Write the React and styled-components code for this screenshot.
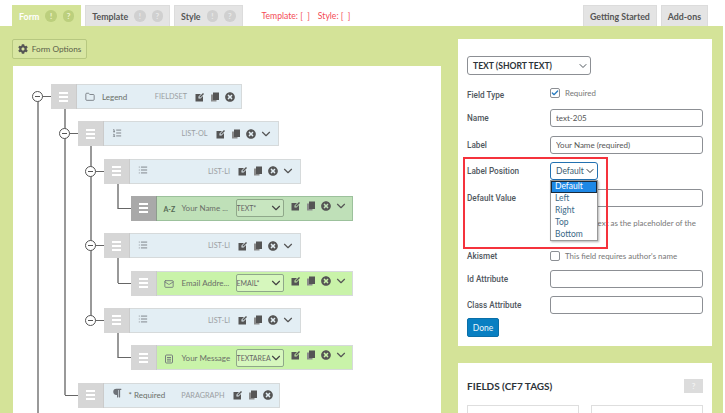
import React from "react";
import styled, { createGlobalStyle } from "styled-components";
import { FaCog, FaTimesCircle, FaParagraph } from "react-icons/fa";
import { ChevronDown, Folder, List, ListOrdered, Mail, Check } from "lucide-react";

const FONT = `Lato, "Open Sans", sans-serif`;
const LABEL_FONT = `Roboto, "Open Sans", sans-serif`;

const Global = createGlobalStyle`
  html, body { margin: 0; padding: 0; background: #fff; overflow: hidden; }
  * { box-sizing: border-box; }
  body { font-family: ${FONT}; }
`;

const Page = styled.div`
  width: 725px;
  height: 413px;
  overflow: hidden;
  display: flex;
  flex-direction: column;
`;

const TabBar = styled.div`
  display: flex;
  align-items: flex-end;
  height: 26px;
  padding: 0 17px 0 12px;
  gap: 4px;
`;

const Tab = styled.div`
  height: 21px;
  padding: 0 6px;
  display: flex;
  align-items: center;
  gap: 6px;
  font-size: 8.8px;
  font-weight: 700;
  color: ${(p) => (p.$active ? "#fff" : "#555")};
  background: ${(p) => (p.$active ? "#d4e398" : "#e4e4e4")};
  border: 1px solid ${(p) => (p.$active ? "#d4e398" : "#dcdcdc")};
  border-bottom: none;
`;

const Badges = styled.span`
  display: flex;
  gap: 6px;
`;

const Badge = styled.span`
  width: 11.5px;
  height: 11.5px;
  border-radius: 50%;
  background: ${(p) => (p.$active ? "#bccf7d" : "#d0d0d0")};
  color: ${(p) => (p.$active ? "#eef4d3" : "#e9e9e9")};
  font-size: 8px;
  font-weight: 700;
  display: flex;
  align-items: center;
  justify-content: center;
`;

const Notes = styled.div`
  margin-left: 15px;
  align-self: flex-end;
  height: 15px;
  display: flex;
  gap: 8px;
  font-size: 8.6px;
  color: #f44a55;
`;

const Spacer = styled.div`
  flex: 1;
`;

const Board = styled.div`
  flex: 1;
  margin-right: 2px;
  padding: 13px 11px 0 13px;
  background: #d4e398;
  display: grid;
  grid-template-columns: 428px 254px;
  column-gap: 17px;
  min-height: 0;
`;

const Column = styled.div`
  display: flex;
  flex-direction: column;
  min-height: 0;
`;

const OptionsButton = styled.div`
  align-self: flex-start;
  height: 20px;
  width: 75px;
  margin-left: -1px;
  border: 1px solid #b7c880;
  border-radius: 2px;
  display: flex;
  align-items: center;
  justify-content: center;
  gap: 4px;
  font-size: 8.2px;
  color: #5a5f4a;
  background: #d8e6a2;
  svg { width: 10px; height: 10px; color: #555; }
`;

const Canvas = styled.div`
  flex: 1;
  margin-top: 7px;
  background: #fff;
  overflow: hidden;
  padding: 18px 0 0 38px;
`;

const Branch = styled.ul`
  list-style: none;
  margin: 0 0 0 ${(p) => (p.$root ? 0 : 26.5)}px;
  padding: 0;
`;

const Node = styled.li`
  position: relative;
  margin-top: ${(p) => (p.$root ? 0 : 12.33)}px;

  &::before {
    content: "";
    position: absolute;
    left: -14px;
    top: ${(p) => (p.$root ? "12px" : "-12.33px")};
    width: 2px;
    height: ${(p) => (p.$root ? "400px" : "calc(100% + 12.33px)")};
    background: #999;
  }
  &:last-child::before {
    height: ${(p) => (p.$root ? 400 : 25)}px;
  }
  &::after {
    content: "";
    position: absolute;
    left: -13px;
    top: 12px;
    width: 13px;
    height: 1px;
    background: #666;
  }
`;

const Collapse = styled.span`
  position: absolute;
  z-index: 1;
  left: -19px;
  top: 7px;
  width: 11px;
  height: 11px;
  border: 1px solid #555;
  border-radius: 50%;
  background: #fff;
  &::after {
    content: "";
    position: absolute;
    left: 2px;
    right: 2px;
    top: 4px;
    height: 1px;
    background: #555;
  }
`;

const ROW_WIDTHS = { fieldset: 191, ol: 201, li: 197, leaf: 222, paragraph: 202 };

const Row = styled.div`
  position: relative;
  z-index: 1;
  width: ${(p) => ROW_WIDTHS[p.$kind]}px;
  height: 25px;
  display: flex;
  background: ${(p) => (p.$selected ? "#bfe0b8" : p.$kind === "leaf" ? "#c9f3a9" : "#e3eef4")};
  border: 1px solid ${(p) => (p.$selected ? "#9cc19c" : "#d6dadb")};
`;

const Handle = styled.div`
  flex: none;
  width: 26px;
  margin: -1px 0 -1px -1px;
  background: ${(p) => (p.$selected ? "#a9a9a9" : "#d6d6d6")};
  border-right: 1px solid ${(p) => (p.$selected ? "#8d9c8d" : "#cbcbcb")};
  display: flex;
  flex-direction: column;
  align-items: center;
  justify-content: center;
  gap: 2px;
`;

const Bar = styled.span`
  width: 9px;
  height: 2px;
  background: #fff;
`;

const RowBody = styled.div`
  flex: 1;
  min-width: 0;
  display: flex;
  align-items: center;
  padding: 0 6px 0 ${(p) => (p.$leaf ? 7 : 8)}px;
  color: #666;
`;

const TypeIcon = styled.span`
  flex: none;
  width: ${(p) => (p.$leaf ? 18 : 17)}px;
  margin-top: ${(p) => p.$shift || 0}px;
  display: flex;
  align-items: center;
  color: #6d7278;
  svg { width: 10px; height: 10px; }
`;

const AZ = styled.span`
  font-size: 7px;
  font-weight: 700;
  color: #556a55;
`;

const Label = styled.span`
  font-size: 8px;
  color: #6a6f68;
  white-space: nowrap;
  flex: none;
  width: ${(p) => (p.$leaf ? "54px" : "auto")};
`;

const Kind = styled.span`
  font-size: 7.3px;
  color: #9b9fa3;
  margin-left: auto;
  margin-right: 8px;
`;

const TagSelect = styled.div`
  flex: none;
  width: 48px;
  height: 18px;
  border: 1px solid #8fa88a;
  border-radius: 2px;
  background: ${(p) => (p.$selected ? "#c8e6c0" : "#d6f7bd")};
  display: flex;
  align-items: center;
  justify-content: space-between;
  font-size: 7px;
  color: #666;
  margin-right: 7px;
  overflow: hidden;
  svg { flex: none; width: 14px; height: 14px; color: #444; margin-left: -3px; }
`;

const Actions = styled.span`
  flex: none;
  display: flex;
  align-items: center;
  gap: 5px;
  margin-top: ${(p) => (p.$up ? -5 : 0)}px;
  color: #555;
  svg { display: block; width: 10px; height: 10px; }
  svg.chev { width: 14px; height: 14px; margin: 0 -1px 0 -2px; color: #555; }
`;

const EditIcon = () => (
  <svg viewBox="0 0 20 20" fill="currentColor">
    <path d="M1 4h11l-5 5v4h4l5-5v11H1z" />
    <path d="M9 9l7-7 2 2-7 7H9z" />
  </svg>
);

const CopyIcon = () => (
  <svg viewBox="0 0 20 20">
    <rect x="2" y="5" width="11" height="14" fill="#8b8b8b" />
    <rect x="6" y="1" width="12" height="15" fill="#555" />
  </svg>
);

const MessageIcon = () => (
  <svg viewBox="0 0 20 20" fill="none" stroke="currentColor" strokeWidth="1.8">
    <rect x="3" y="2" width="14" height="16" rx="2" />
    <path d="M6 7h8M6 10.5h8M6 14h8" />
  </svg>
);

const TYPE_ICONS = {
  folder: <Folder />,
  ol: <ListOrdered />,
  li: <List />,
  para: <FaParagraph />,
  mail: <Mail />,
  message: <MessageIcon />,
};

const iconShift = (kind) => {
  if (kind === "ol" || kind === "li") return -2;
  if (kind === "paragraph") return -5;
  if (kind === "leaf") return 2;
  return 0;
};

const TreeNode = ({ node, root }) => {
  const leaf = node.kind === "leaf";
  const hasChildren = !!node.children;
  const listLike = node.kind === "ol" || node.kind === "li";
  return (
    <Node $root={root}>
      {(hasChildren || root) && <Collapse />}
      <Row $kind={node.kind} $selected={node.selected}>
        <Handle $selected={node.selected}>
          <Bar />
          <Bar />
          <Bar />
        </Handle>
        <RowBody $leaf={leaf}>
          <TypeIcon $leaf={leaf} $shift={iconShift(node.kind)}>
            {node.az ? <AZ>A-Z</AZ> : TYPE_ICONS[node.icon]}
          </TypeIcon>
          {node.label && <Label $leaf={leaf}>{node.label}</Label>}
          {leaf ? (
            <TagSelect $selected={node.selected}>
              {node.tag}
              <ChevronDown />
            </TagSelect>
          ) : (
            <Kind>{node.type}</Kind>
          )}
          <Actions $up={leaf}>
            <EditIcon />
            <CopyIcon />
            <FaTimesCircle />
            {(leaf || listLike) && <ChevronDown className="chev" />}
          </Actions>
        </RowBody>
      </Row>
      {hasChildren && (
        <Branch>
          {node.children.map((c, i) => (
            <TreeNode key={i} node={c} />
          ))}
        </Branch>
      )}
    </Node>
  );
};

const tree = {
  kind: "fieldset",
  icon: "folder",
  label: "Legend",
  type: "FIELDSET",
  children: [
    {
      kind: "ol",
      icon: "ol",
      type: "LIST-OL",
      children: [
        {
          kind: "li",
          icon: "li",
          type: "LIST-LI",
          children: [{ kind: "leaf", az: true, label: "Your Name ...", tag: "TEXT*", selected: true }],
        },
        {
          kind: "li",
          icon: "li",
          type: "LIST-LI",
          children: [{ kind: "leaf", icon: "mail", label: "Email Addre...", tag: "EMAIL*" }],
        },
        {
          kind: "li",
          icon: "li",
          type: "LIST-LI",
          children: [{ kind: "leaf", icon: "message", label: "Your Message", tag: "TEXTAREA" }],
        },
      ],
    },
    { kind: "paragraph", icon: "para", label: "* Required", type: "PARAGRAPH" },
  ],
};

const Panel = styled.section`
  position: relative;
  background: #fff;
  padding: ${(p) => (p.$fields ? "16px 9px 0" : "17px 9px 9px")};
  margin-top: ${(p) => (p.$fields ? 17 : 0)}px;
`;

const TypeSelect = styled.div`
  width: 124px;
  height: 19px;
  border: 1px solid #8c8f94;
  border-radius: 3px;
  padding: 0 1px 0 5px;
  display: flex;
  align-items: center;
  justify-content: space-between;
  font-size: 8.6px;
  font-weight: 700;
  color: #2c3338;
  svg { width: 12px; height: 12px; color: #50575e; }
`;

const Field = styled.div`
  position: relative;
  display: grid;
  grid-template-columns: 83px 153px;
  align-items: ${(p) => (p.$start ? "start" : "center")};
  margin-top: ${(p) => (p.$gap === undefined ? 9 : p.$gap)}px;
`;

const FieldLabel = styled.label`
  font-family: ${LABEL_FONT};
  font-size: 8.2px;
  font-weight: 500;
  color: #50575e;
  padding-top: ${(p) => p.$offset || 0}px;
`;

const TextInput = styled.input`
  width: 153px;
  height: 18px;
  border: 1px solid #8c8f94;
  border-radius: 3px;
  padding: 0 5px;
  font: 8px ${FONT};
  color: #555;
  background: #fff;
  outline: none;
`;

const CheckLine = styled.div`
  display: flex;
  align-items: flex-start;
  gap: 5px;
  font-size: 7.9px;
  line-height: ${(p) => (p.$wrap ? 14 : 11)}px;
  color: #777;
`;

const Box = styled.span`
  flex: none;
  width: 10px;
  height: 10px;
  margin-top: ${(p) => (p.$wrap ? 2 : 0)}px;
  border: 1px solid #8c8f94;
  border-radius: 2px;
  background: #fff;
  display: flex;
  align-items: center;
  justify-content: center;
  svg { width: 8px; height: 8px; color: #2a7cc0; stroke-width: 4; }
`;

const PositionSelect = styled.div`
  width: 48px;
  height: 18px;
  border: 1px solid #2271b1;
  border-radius: 3px;
  padding: 0 1px 0 5px;
  display: flex;
  align-items: center;
  justify-content: space-between;
  font-size: 8.5px;
  color: #3a5a70;
  background: #fff;
  svg { width: 12px; height: 12px; color: #333; }
`;

const Dropdown = styled.ul`
  position: absolute;
  z-index: 3;
  left: 83px;
  top: 18px;
  width: 48px;
  height: 61px;
  margin: 0;
  padding: 0;
  list-style: none;
  background: #fff;
  border: 1px solid #999;
  box-shadow: 1px 1px 2px rgba(0, 0, 0, 0.3);
`;

const Option = styled.li`
  height: 12px;
  line-height: 11px;
  padding-left: 4px;
  font-size: 8.5px;
  color: ${(p) => (p.$on ? "#fff" : "#3c6a88")};
  background: ${(p) => (p.$on ? "#1e88e5" : "transparent")};
  outline: ${(p) => (p.$on ? "1px solid #1a2a3a" : "none")};
  outline-offset: -1px;
`;

const Callout = styled.div`
  position: absolute;
  z-index: 4;
  left: 5px;
  top: 118px;
  width: 145px;
  height: 92px;
  border: 2px solid #f5323c;
  pointer-events: none;
`;

const DoneButton = styled.button`
  display: block;
  margin-top: 4px;
  width: 32px;
  height: 19px;
  padding: 0;
  border: 1px solid #0a6fa8;
  border-radius: 2px;
  background: #087fc2;
  color: #e8f4fb;
  font: 8.5px ${FONT};
`;

const FieldsHead = styled.div`
  display: flex;
  align-items: center;
  justify-content: space-between;
  height: 14px;
`;

const FieldsTitle = styled.h2`
  margin: 0;
  font-size: 10px;
  font-weight: 700;
  color: #2c3338;
`;

const HelpButton = styled.span`
  width: 19px;
  height: 14px;
  background: #dcdcdc;
  color: #f2f2f2;
  font-size: 8px;
  font-weight: 700;
  display: flex;
  align-items: center;
  justify-content: center;
`;

const Palette = styled.div`
  display: grid;
  grid-template-columns: 112px 112px;
  justify-content: space-between;
  margin-top: 12px;
`;

const PaletteBox = styled.div`
  height: 40px;
  border: 1px solid #dedede;
`;

const InfoBadges = ({ active }) => (
  <Badges>
    <Badge $active={active}>!</Badge>
    <Badge $active={active}>?</Badge>
  </Badges>
);

export default function App() {
  return (
    <Page>
      <Global />
      <TabBar>
        <Tab $active>
          Form
          <InfoBadges active />
        </Tab>
        <Tab>
          Template
          <InfoBadges />
        </Tab>
        <Tab>
          Style
          <InfoBadges />
        </Tab>
        <Notes>
          <span>Template: [ &nbsp;]</span>
          <span>Style: [ &nbsp;]</span>
        </Notes>
        <Spacer />
        <Tab>Getting Started</Tab>
        <Tab>Add-ons</Tab>
      </TabBar>
      <Board>
        <Column>
          <OptionsButton>
            <FaCog />
            Form Options
          </OptionsButton>
          <Canvas>
            <Branch $root>
              <TreeNode node={tree} root />
            </Branch>
          </Canvas>
        </Column>
        <Column>
          <Panel>
            <TypeSelect>
              TEXT (SHORT TEXT)
              <ChevronDown />
            </TypeSelect>
            <Field $start $gap={13}>
              <FieldLabel $offset={2}>Field Type</FieldLabel>
              <CheckLine>
                <Box>
                  <Check />
                </Box>
                Required
              </CheckLine>
            </Field>
            <Field>
              <FieldLabel>Name</FieldLabel>
              <TextInput defaultValue="text-205" />
            </Field>
            <Field>
              <FieldLabel>Label</FieldLabel>
              <TextInput defaultValue="Your Name (required)" />
            </Field>
            <Field $gap={8}>
              <FieldLabel>Label Position</FieldLabel>
              <PositionSelect>
                Default
                <ChevronDown />
              </PositionSelect>
              <Dropdown>
                <Option $on>Default</Option>
                <Option>Left</Option>
                <Option>Right</Option>
                <Option>Top</Option>
                <Option>Bottom</Option>
              </Dropdown>
            </Field>
            <Field>
              <FieldLabel>Default Value</FieldLabel>
              <TextInput />
            </Field>
            <Field $start>
              <span />
              <CheckLine $wrap>
                <Box $wrap />
                <span>Use this text as the placeholder of the field.</span>
              </CheckLine>
            </Field>
            <Field $start $gap={7}>
              <FieldLabel>Akismet</FieldLabel>
              <CheckLine>
                <Box />
                This field requires author's name
              </CheckLine>
            </Field>
            <Field $gap={8}>
              <FieldLabel>Id Attribute</FieldLabel>
              <TextInput />
            </Field>
            <Field $gap={8}>
              <FieldLabel>Class Attribute</FieldLabel>
              <TextInput />
            </Field>
            <DoneButton>Done</DoneButton>
            <Callout />
          </Panel>
          <Panel $fields>
            <FieldsHead>
              <FieldsTitle>FIELDS (CF7 TAGS)</FieldsTitle>
              <HelpButton>?</HelpButton>
            </FieldsHead>
            <Palette>
              <PaletteBox />
              <PaletteBox />
            </Palette>
          </Panel>
        </Column>
      </Board>
    </Page>
  );
}
